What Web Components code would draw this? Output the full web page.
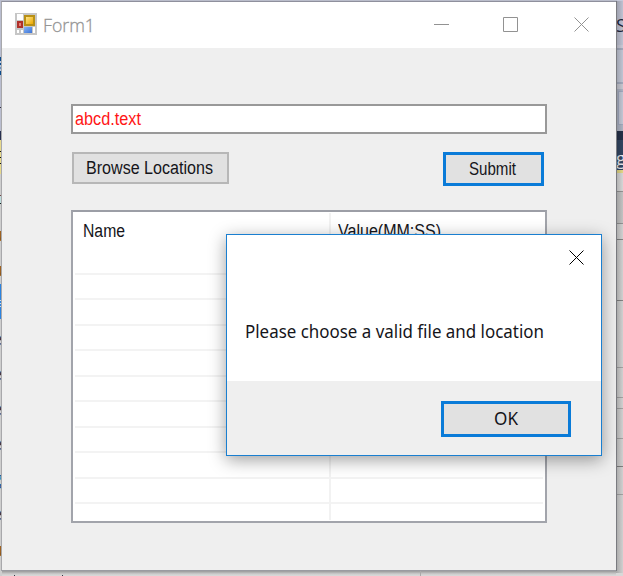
<!DOCTYPE html>
<html lang="en">
<head>
<meta charset="utf-8">
<title>Form1</title>
<style>
html,body{margin:0;width:623px;height:576px;overflow:hidden;font-family:"Liberation Sans",Arial,sans-serif}
</style>
</head>
<body>
<app-desktop>
  <app-window caption="Form1">
    <file-form></file-form>
  </app-window>
  <message-box slot="dialog">Please choose a valid file and location</message-box>
</app-desktop>
<script>
const define = (name, html, ready) => customElements.define(name, class extends HTMLElement {
  connectedCallback() {
    if (this.shadowRoot) return;
    const t = document.createElement('template');
    t.innerHTML = html;
    this.attachShadow({ mode: 'open' }).append(t.content.cloneNode(true));
    if (ready) ready(this, this.shadowRoot);
  }
});

/* Text line condensed or widened to the width in its "w" attribute. */
define('fit-text', `<style>
:host{display:block;white-space:nowrap;line-height:24px;height:24px;overflow:visible}
span{display:inline-block;transform-origin:0 50%}
</style><span><slot></slot></span>`, (el, root) => {
  const s = root.querySelector('span'), w = +el.getAttribute('w');
  el.style.width = w + 'px';
  s.style.transform = `scaleX(${w / s.getBoundingClientRect().width})`;
});

define('edge-strip', `<style>
:host{display:block;position:relative;overflow:hidden}
i{position:absolute;left:0;right:0}
b{position:absolute;font:18px/20px "Open Sans",sans-serif}
</style>`, (el, root) => {
  const left = el.getAttribute('side') === 'left';
  const bands = left ? [
    [0,57,'#b9bdcf'],[57,4,'#0b4b8b'],[61,10,'#b8c6dd'],[63,2,'#0b4b8b'],[67,2,'#6a93bd'],[71,4,'#0b4b8b'],[75,56,'#b9bdcf'],
    [107,1,'#334'],[131,9,'#27304e'],[140,34,'#e7d98b'],[151,1,'#111'],[157,1,'#111'],[163,1,'#111'],[174,402,'#cecece'],
    [195,1,'#744'],[196,7,'#bcdcdc'],[203,1,'#122'],[284,35,'#2b83e0'],[300,1,'#cde'],[303,1,'#cde'],[306,1,'#cde']
  ] : [
    [0,46,'#c6c9da'],[45,4,'#d0d1df'],[48,2,'#a9b0c3'],[50,32,'#c7ccdb'],[82,2,'#a9b0c3'],[84,5,'#cdced8'],[89,42,'#b3b9c9'],
    [131,9,'#26324b'],[140,30,'#344865'],[170,3,'#eadf8b'],[173,18,'#dedede'],[191,32,'#cacaca'],[191,1,'#999'],[223,1,'#999'],
    [224,352,'#d8d8d8'],[239,1,'#888'],[300,1,'#888'],[367,1,'#aaa'],[397,1,'#aaa'],[408,1,'#aaa'],[438,1,'#aaa'],[466,1,'#858585'],[494,1,'#aaa']
  ];
  bands.forEach(([y, h, c]) => {
    const i = document.createElement('i');
    i.style.cssText = `top:${y}px;height:${h}px;background:${c}`;
    root.append(i);
  });
  if (!left) {
    const i = document.createElement('i');
    i.style.cssText = 'left:2px;top:91px;height:32px;background:#c9cddb;border:1px solid #a6aec4;border-right:0';
    root.append(i);
  }
  const glyphs = left
    ? [['u',224,'#8a5a20'],['u',259,'#8a5a20'],['e',328,'#432'],['e',363,'#432'],['e',398,'#432'],['e',433,'#432'],['g',468,'#235a9a'],['e',503,'#432'],['u',539,'#8a5a20']]
    : [['S',15,'#1c2740'],['g',148,'#f0f3f8']];
  glyphs.forEach(([ch, y, c]) => {
    const b = document.createElement('b');
    b.textContent = ch;
    b.style.cssText = `top:${y}px;color:${c};` + (left ? 'right:' + (ch === 'u' ? -1 : 0) + 'px' : 'left:0');
    root.append(b);
  });
});

define('app-desktop', `<style>
:host{display:grid;grid-template-columns:2px 614px 7px;grid-template-rows:571px 5px;width:623px;height:576px;position:relative;overflow:hidden;background:#d9d9d9}
edge-strip{grid-row:1/3}
.mid{grid-column:2;grid-row:1;min-width:0;z-index:1}
.r{grid-column:3}
.l{grid-column:1}
.foot{grid-column:2;grid-row:2;display:flex;gap:47px;padding-left:12px;background:linear-gradient(#999,#cdcdcd 3px,#dadada)}
.foot i{width:1px;height:1px;margin-top:4px;background:#334}
.foot i:last-child{width:1px;height:5px;margin:0 0 0 310px;background:#aaa}
.shade{position:absolute;left:616px;top:1px;width:7px;height:572px;background:linear-gradient(90deg,rgba(0,0,0,.22),rgba(0,0,0,.04));z-index:1}
</style>
<edge-strip class="l" side="left"></edge-strip><div class="mid"><slot></slot></div><edge-strip class="r" side="right"></edge-strip>
<div class="foot"><i></i><i></i><i></i></div><div class="shade"></div><slot name="dialog"></slot>`);

define('app-window', `<style>
:host{display:grid;grid-template-rows:46px 522px;margin:0 0 0 -1px;width:614px;border:1px solid #9a9ba1;border-left-color:rgba(120,120,125,.6);border-top:1px solid #8f909d;background:#efefef;height:568px;box-shadow:0 -1px #babdcb;position:relative;top:1px}
header{display:flex;align-items:center;background:#fff;padding:0 26px 0 13px;height:46px;box-sizing:border-box}
fit-text{font:300 19px/24px "Open Sans",sans-serif;-webkit-text-stroke:.3px #999;margin:0 auto 0 6px;color:#909090}
svg{display:block}
svg:first-child{margin-top:-2px}
</style>
<header>
<svg width="22" height="22" viewBox="0 0 22 22"><defs>
<linearGradient id="y" x2="1" y2="1"><stop stop-color="#ffe58a"/><stop offset="1" stop-color="#eda800"/></linearGradient>
<linearGradient id="b" y2="1"><stop stop-color="#86b4f5"/><stop offset="1" stop-color="#3c73d6"/></linearGradient></defs>
<rect width="22" height="22" fill="#c6c6c6"/><rect x="2" y="1" width="6" height="6" fill="#fff"/><rect x="2" y="8" width="6" height="7" fill="#b0302a"/><rect x="4" y="10" width="2" height="3" fill="#e58077"/>
<path d="M2 17h2v3H2zM6 17h2v3H6zM18 14h2v6h-2z" fill="#fff"/>
<rect x="9" y="2" width="11" height="11" fill="#b89016"/><rect x="11" y="4" width="7" height="7" fill="url(#y)"/><rect x="9" y="14" width="8" height="6" fill="url(#b)"/></svg>
<fit-text w="52"></fit-text>
<svg width="156" height="16" viewBox="0 0 156 16" fill="none" stroke="#929292"><path d="M0 7.500h15M69.500.5h14v14h-14zM140.500.5l14 14M154.500.5l-14 14"/></svg>
</header><slot></slot>`, (el, root) => {
  const o = root.querySelector('fit-text'), n = o.cloneNode();
  n.textContent = el.getAttribute('caption');
  o.replaceWith(n);
});

define('push-button', `<style>
:host{display:flex;box-sizing:border-box;background:#e1e1e1;border:2px solid #b7b7b7;align-items:center;justify-content:center;color:#15151a}
:host([primary]){border:3px solid #0a7bd8}
</style><slot></slot>`);

define('list-grid', `<style>
:host{display:block;box-sizing:border-box;width:476px;height:313px;border:2px solid #a2a4ab;border-top-color:#9c9ea6;background:#fff;padding:1px 2px;position:relative}
.g{display:grid;grid-template-columns:256px 1fr;grid-template-rows:61.500px;grid-auto-rows:25.550px;height:307px;overflow:hidden;font-size:18px;color:#15151a}
.g>*{border-right:2px solid #f2f2f2;border-bottom:2px solid #f3f3f3;box-sizing:border-box}
.g>:nth-child(2n){border-right:0}
.h{padding:6px 0 0 8px}
.h+.h{padding-left:7px}
</style><div class="g"><div class="h"><fit-text w="42">Name</fit-text></div><div class="h"><fit-text w="103">Value(MM:SS)</fit-text></div></div>`, (el, root) => {
  const g = root.querySelector('.g');
  for (let i = 0; i < 20; i++) g.append(document.createElement('div'));
});

define('file-form', `<style>
:host{display:flex;flex-direction:column;padding:56px 0 0 69px;font-size:18px}
.in{box-sizing:border-box;width:476px;height:30px;border:2px solid #999;background:#fff;color:#ff1616;padding:1px 0 0 2px}
.row{display:flex;justify-content:space-between;width:472px;margin:18px 0 24px 1px}
.a{width:157px;height:32px;padding-right:2px}.s{width:101px;height:34px;padding-right:2px}
</style><div class="in"><fit-text w="66">abcd.text</fit-text></div>
<div class="row"><push-button class="a"><fit-text w="127">Browse Locations</fit-text></push-button><push-button class="s" primary><fit-text w="47">Submit</fit-text></push-button></div>
<list-grid></list-grid>`);

define('message-box', `<style>
:host{position:absolute;left:226px;top:234px;width:376px;height:222px;box-sizing:border-box;border:1px solid #1a7fd0;background:#fff;z-index:2;display:grid;grid-template-rows:146px 74px;box-shadow:0 4px 16px rgba(0,0,0,.38);font:18px/24px "Noto Sans",sans-serif;color:#15151a}
.t{display:flex;flex-direction:column;padding:15px 17px 0 18px}
svg{align-self:flex-end}
.t fit-text{margin-top:54px}
.f{background:#efefef;display:flex;justify-content:flex-end;align-items:flex-start;padding:20px 30px 0 0}
push-button{box-sizing:border-box;width:130px;height:36px;padding-bottom:2px}
</style><div class="t"><svg width="15" height="15" viewBox="0 0 15 15" stroke="#000"><path d="M.5.5l14 14M14.500.5l-14 14"/></svg><fit-text w="299"><slot></slot></fit-text></div>
<div class="f"><push-button primary><fit-text w="24">OK</fit-text></push-button></div>`);
</script>
</body>
</html>
